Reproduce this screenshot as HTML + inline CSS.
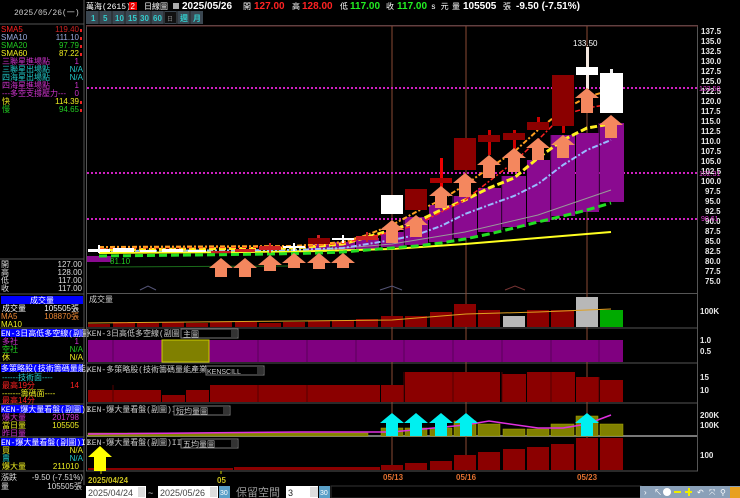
<!DOCTYPE html>
<html><head><meta charset="utf-8"><style>
html,body{margin:0;padding:0;background:#000;width:740px;height:498px;overflow:hidden}
svg{display:block}
text{font-family:"Liberation Sans","Noto Sans CJK TC",sans-serif}
.s{font-family:"Liberation Mono","Noto Sans CJK TC",monospace;font-size:8px}
.ax{font-size:8px;font-weight:bold;fill:#e8e8e8}
</style></head><body>
<svg width="740" height="498" viewBox="0 0 740 498" xmlns="http://www.w3.org/2000/svg">
<rect width="740" height="498" fill="#000"/>
<!-- top bar -->
<text x="86" y="9" class="s" fill="#fff">萬海(2615)</text>
<rect x="129" y="2" width="8" height="8" fill="#e00"/><text x="130.5" y="9" font-size="8" fill="#fff">2</text>
<text x="144" y="9" class="s" fill="#fff">日線圖</text>
<rect x="173" y="3" width="6" height="6" fill="#aaa"/>
<text x="182" y="9" font-size="10" font-weight="bold" fill="#fff">2025/05/26</text>
<text x="243" y="9" class="s" fill="#fff">開</text><text x="254" y="9" font-size="10" font-weight="bold" fill="#f22">127.00</text>
<text x="292" y="9" class="s" fill="#fff">高</text><text x="302" y="9" font-size="10" font-weight="bold" fill="#f22">128.00</text>
<text x="340" y="9" class="s" fill="#fff">低</text><text x="350" y="9" font-size="10" font-weight="bold" fill="#2e2">117.00</text>
<text x="386" y="9" class="s" fill="#fff">收</text><text x="397" y="9" font-size="10" font-weight="bold" fill="#2e2">117.00</text>
<text x="431" y="9" class="s" fill="#fff">s 元</text>
<text x="452" y="9" class="s" fill="#fff">量</text><text x="463" y="9" font-size="10" font-weight="bold" fill="#fff">105505</text>
<text x="503" y="9" class="s" fill="#fff">張</text><text x="516" y="9" font-size="10" font-weight="bold" fill="#fff">-9.50 (-7.51%)</text>
<!-- buttons -->
<rect x="86" y="11" width="117" height="13" fill="#3a4650"/>
<g font-size="8" font-weight="bold" fill="#3cc">
<text x="91" y="21">1</text><text x="103" y="21">5</text><text x="115" y="21">10</text><text x="128" y="21">15</text><text x="140" y="21">30</text><text x="153" y="21">60</text>
<text x="180" y="21">週</text><text x="193" y="21">月</text></g>
<rect x="165" y="12" width="11" height="11" fill="#111"/><text x="167" y="21" font-size="6" fill="#888">日</text>
<g stroke="#222" stroke-width="1"><line x1="99" y1="11" x2="99" y2="24"/><line x1="112" y1="11" x2="112" y2="24"/><line x1="125" y1="11" x2="125" y2="24"/><line x1="138" y1="11" x2="138" y2="24"/><line x1="151" y1="11" x2="151" y2="24"/><line x1="164" y1="11" x2="164" y2="24"/><line x1="177" y1="11" x2="177" y2="24"/><line x1="190" y1="11" x2="190" y2="24"/></g>

<!-- left panel -->
<line x1="84" y1="0" x2="84" y2="485" stroke="#555"/>
<text x="14" y="15" class="s" fill="#ccc">2025/05/26(一)</text>
<line x1="0" y1="24" x2="84" y2="24" stroke="#555"/>
<g class="s">
<text x="1" y="32" fill="#f22">SMA5</text><text x="79" y="32" text-anchor="end" fill="#c22">119.40</text>
<text x="1" y="40" fill="#9ad">SMA10</text><text x="79" y="40" text-anchor="end" fill="#9ad">111.10</text>
<text x="1" y="48" fill="#2c2">SMA20</text><text x="79" y="48" text-anchor="end" fill="#2c2">97.79</text>
<text x="1" y="56" fill="#ee2">SMA60</text><text x="79" y="56" text-anchor="end" fill="#ee2">87.22</text>
<text x="2" y="64" fill="#c3c">三聯星進場點</text><text x="79" y="64" text-anchor="end" fill="#c3c">1</text>
<text x="2" y="72" fill="#2cc">三聯星出場點</text><text x="83" y="72" text-anchor="end" fill="#2cc">N/A</text>
<text x="2" y="80" fill="#2cc">四海星出場點</text><text x="83" y="80" text-anchor="end" fill="#2cc">N/A</text>
<text x="2" y="88" fill="#c3c">四海星進場點</text><text x="79" y="88" text-anchor="end" fill="#c3c">1</text>
<text x="2" y="96" fill="#c3c">---多空支撐壓力---</text><text x="79" y="96" text-anchor="end" fill="#c3c">0</text>
<text x="2" y="104" fill="#ee2">快</text><text x="79" y="104" text-anchor="end" fill="#ee2">114.39</text>
<text x="2" y="112" fill="#2c2">慢</text><text x="79" y="112" text-anchor="end" fill="#2c2">94.65</text>
</g>
<g fill="#e22"><rect x="80" y="29" width="2" height="3"/><rect x="80" y="37" width="2" height="3"/><rect x="80" y="45" width="2" height="3"/><rect x="80" y="53" width="2" height="3"/><rect x="80" y="101" width="2" height="3"/><rect x="80" y="109" width="2" height="3"/></g>
<line x1="0" y1="259" x2="84" y2="259" stroke="#555"/>
<g class="s" fill="#ddd">
<text x="1" y="267">開</text><text x="82" y="267" text-anchor="end">127.00</text>
<text x="1" y="275">高</text><text x="82" y="275" text-anchor="end">128.00</text>
<text x="1" y="283">低</text><text x="82" y="283" text-anchor="end">117.00</text>
<text x="1" y="291">收</text><text x="82" y="291" text-anchor="end">117.00</text></g>
<line x1="0" y1="294" x2="84" y2="294" stroke="#555"/>
<rect x="1" y="296" width="82" height="8" fill="#00f"/><text x="30" y="303" class="s" fill="#fff">成交量</text>
<g class="s"><text x="2" y="311" fill="#fff">成交量</text><text x="79" y="311" text-anchor="end" fill="#fff">105505張</text>
<text x="1" y="319" fill="#e83">MA5</text><text x="79" y="319" text-anchor="end" fill="#e83">108870張</text>
<text x="1" y="327" fill="#ee2">MA10</text></g>
<line x1="0" y1="328" x2="84" y2="328" stroke="#555"/>
<rect x="1" y="329" width="82" height="8" fill="#00f"/><text x="1" y="336" class="s" fill="#fff">EN-3日高低多空線(副圖</text>
<g class="s"><text x="2" y="344" fill="#c3c">多社</text><text x="79" y="344" text-anchor="end" fill="#c3c">1</text>
<text x="2" y="352" fill="#2c2">空社</text><text x="83" y="352" text-anchor="end" fill="#2c2">N/A</text>
<text x="2" y="360" fill="#ee2">休</text><text x="83" y="360" text-anchor="end" fill="#ee2">N/A</text></g>
<line x1="0" y1="363" x2="84" y2="363" stroke="#555"/>
<rect x="1" y="364" width="82" height="8" fill="#00f"/><text x="1" y="371" class="s" fill="#fff">多策略股(技術籌碼量能,</text>
<g class="s"><text x="2" y="380" fill="#2cc">------技術面----</text>
<text x="2" y="388" fill="#f22">最高19分</text><text x="79" y="388" text-anchor="end" fill="#f22">14</text>
<text x="2" y="396" fill="#ee2">-------籌碼面----</text>
<text x="2" y="403" fill="#f22">最高14分</text></g>
<line x1="0" y1="404" x2="84" y2="404" stroke="#555"/>
<rect x="1" y="405" width="82" height="8" fill="#00f"/><text x="1" y="412" class="s" fill="#fff">KEN-爆大量看盤(副圖)I</text>
<g class="s"><text x="2" y="420" fill="#c3c">爆大量</text><text x="79" y="420" text-anchor="end" fill="#c3c">201798</text>
<text x="2" y="428" fill="#ee2">當日量</text><text x="79" y="428" text-anchor="end" fill="#ee2">105505</text>
<text x="2" y="436" fill="#c3c">昨日量</text></g>
<line x1="0" y1="437" x2="84" y2="437" stroke="#555"/>
<rect x="1" y="438" width="82" height="8" fill="#00f"/><text x="1" y="445" class="s" fill="#fff">EN-爆大量看盤(副圖)II</text>
<g class="s"><text x="2" y="453" fill="#ee2">買</text><text x="83" y="453" text-anchor="end" fill="#ee2">N/A</text>
<text x="2" y="461" fill="#2cc">賣</text><text x="83" y="461" text-anchor="end" fill="#2cc">N/A</text>
<text x="2" y="469" fill="#ee2">爆大量</text><text x="79" y="469" text-anchor="end" fill="#ee2">211010</text></g>
<line x1="0" y1="471" x2="84" y2="471" stroke="#555"/>
<g class="s" fill="#ddd"><text x="1" y="480">漲跌</text><text x="83" y="480" text-anchor="end">-9.50 (-7.51%)</text>
<text x="1" y="489">量</text><text x="82" y="489" text-anchor="end">105505張</text></g>

<!-- chart frames -->
<g stroke="#555" fill="none">
<rect x="86.5" y="25.5" width="611" height="268"/>
<line x1="86" y1="328" x2="698" y2="328"/>
<line x1="86" y1="363" x2="698" y2="363"/>
<line x1="86" y1="403" x2="698" y2="403"/>
<line x1="86" y1="436" x2="698" y2="436" stroke="#777" stroke-width="2"/>
<line x1="86" y1="471" x2="698" y2="471"/>
<line x1="697.5" y1="294" x2="697.5" y2="471"/>
<line x1="86.5" y1="294" x2="86.5" y2="471"/>
</g>
<line x1="86" y1="26" x2="698" y2="26" stroke="#6a3030"/>
<g stroke="#8a4a35" stroke-width="1"><line x1="392" y1="26" x2="392" y2="471"/><line x1="466" y1="26" x2="466" y2="471"/><line x1="587" y1="26" x2="587" y2="471"/></g>
<g stroke="#d020c0" stroke-width="2" stroke-dasharray="2,2"><line x1="87" y1="88" x2="697" y2="88"/><line x1="87" y1="173" x2="697" y2="173"/><line x1="87" y1="219" x2="697" y2="219"/></g>

<!-- purple area -->
<g fill="#8a0a90">
<rect x="87" y="256" width="24" height="6"/>
<rect x="308" y="243" width="22" height="8"/><rect x="332" y="242" width="23" height="9"/><rect x="356" y="238" width="23" height="11"/>
<rect x="381" y="232" width="23" height="15"/><rect x="405" y="217" width="23" height="28"/><rect x="429" y="205" width="23" height="37"/><rect x="454" y="196" width="23" height="42"/><rect x="478" y="188" width="23" height="44"/><rect x="502" y="176" width="24" height="51"/><rect x="527" y="160" width="23" height="62"/><rect x="551" y="135" width="24" height="81"/><rect x="576" y="133" width="23" height="79"/><rect x="600" y="123" width="24" height="79"/>
</g>
<g stroke="#6a0870" stroke-width="1"><line x1="404" y1="217" x2="404" y2="247"/><line x1="453" y1="196" x2="453" y2="240"/><line x1="502" y1="176" x2="502" y2="230"/><line x1="551" y1="135" x2="551" y2="220"/><line x1="599" y1="123" x2="599" y2="210"/></g>
<polyline fill="none" stroke="#1a6a1a" stroke-width="1" points="99,267 290,266"/>
<polyline fill="none" stroke="#999" stroke-width="1" points="319,250 392,244 465,232 538,215 611,190"/>
<polyline fill="none" stroke="#ffff20" stroke-width="2" points="99,253 245,252 319,251 392,249 465,244 538,238 611,232"/>
<polyline fill="none" stroke="#22dd22" stroke-width="3" stroke-dasharray="8,4" points="99,256 197,255 270,254 319,253 343,252 367,250 392,248 416,246 441,243 465,239 489,234 514,228 538,222 563,216 587,210 611,203"/>
<polyline fill="none" stroke="#99bbff" stroke-width="2" stroke-dasharray="6,2,2,2" points="99,251 294,250 343,248 392,240 416,235 441,226 465,214 489,205 514,196 538,184 563,165 587,150 611,140"/>
<polyline fill="none" stroke="#ffee22" stroke-width="3" stroke-dasharray="7,3" points="99,250 294,248 343,244 392,230 416,222 441,210 465,200 489,188 514,178 538,158 563,140 587,128 611,124"/>
<polyline fill="none" stroke="#ff2020" stroke-width="1.5" stroke-dasharray="5,2,2,2" points="99,248 294,247 343,243 392,232 416,225 465,200 514,162 538,140 563,115 587,108 611,104"/>
<polyline fill="none" stroke="#ffa020" stroke-width="2" stroke-dasharray="5,2,2,2" points="99,247 294,246 343,242 367,235 392,225 416,212 441,200 465,185 489,168 514,152 538,130 563,110 587,97 611,90"/>
<g fill="#fff"><rect x="88" y="249" width="22" height="3"/><rect x="98" y="245" width="2" height="8"/><rect x="113" y="248" width="21" height="4"/><rect x="140" y="250" width="16" height="2"/><rect x="162" y="249" width="21" height="3"/><rect x="188" y="250" width="18" height="2"/><rect x="283" y="246" width="22" height="2"/><rect x="293" y="243" width="2" height="8"/><rect x="332" y="238" width="22" height="2"/><rect x="342" y="235" width="2" height="8"/></g>
<g fill="#c22"><rect x="211" y="251" width="20" height="2"/><rect x="235" y="249" width="20" height="3"/><rect x="259" y="246" width="22" height="4"/><rect x="269" y="243" width="2" height="10"/><rect x="356" y="236" width="22" height="4"/><rect x="366" y="232" width="2" height="10"/></g>
<rect x="308" y="238" width="22" height="6" fill="#8b0000"/><rect x="317" y="235" width="3" height="3" fill="#c22"/>
<rect x="381" y="195" width="22" height="19" fill="#fff"/>
<rect x="405" y="189" width="22" height="21" fill="#8b0000"/>
<rect x="440" y="158" width="3" height="32" fill="#e00"/><rect x="430" y="178" width="22" height="5" fill="#a00"/>
<rect x="454" y="138" width="22" height="32" fill="#8b0000"/>
<rect x="488" y="130" width="3" height="25" fill="#c00"/><rect x="478" y="135" width="22" height="7" fill="#8b0000"/>
<rect x="513" y="130" width="3" height="22" fill="#c00"/><rect x="503" y="133" width="22" height="7" fill="#8b0000"/>
<rect x="537" y="117" width="3" height="13" fill="#c00"/><rect x="527" y="122" width="22" height="8" fill="#8b0000"/>
<rect x="562" y="75" width="3" height="58" fill="#c00"/><rect x="552" y="75" width="22" height="51" fill="#8b0000"/>
<rect x="586" y="47" width="3" height="42" fill="#f4e8e0"/><rect x="576" y="67" width="22" height="8" fill="#fff"/>
<text x="573" y="46" font-size="8" fill="#fff">133.50</text>
<rect x="610" y="69" width="3" height="6" fill="#eee"/><rect x="600" y="73" width="23" height="40" fill="#fff"/>
<g fill="#f4875e">
<path d="M221,258 L233,268 L227,268 L227,277 L215,277 L215,268 L209,268Z"/>
<path d="M245,258 L257,268 L251,268 L251,277 L239,277 L239,268 L233,268Z"/>
<path d="M270,255 L282,265 L276,265 L276,271 L264,271 L264,265 L258,265Z"/>
<path d="M294,253 L306,263 L300,263 L300,268 L288,268 L288,263 L282,263Z"/>
<path d="M319,253 L331,263 L325,263 L325,269 L313,269 L313,263 L307,263Z"/>
<path d="M343,253 L355,263 L349,263 L349,268 L337,268 L337,263 L331,263Z"/>
<path d="M392,220 L404,230 L398,230 L398,243 L386,243 L386,230 L380,230Z"/>
<path d="M416,215 L428,225 L422,225 L422,237 L410,237 L410,225 L404,225Z"/>
<path d="M441,186 L453,196 L447,196 L447,208 L435,208 L435,196 L429,196Z"/>
<path d="M465,173 L477,183 L471,183 L471,197 L459,197 L459,183 L453,183Z"/>
<path d="M489,155 L501,165 L495,165 L495,178 L483,178 L483,165 L477,165Z"/>
<path d="M514,148 L526,158 L520,158 L520,172 L508,172 L508,158 L502,158Z"/>
<path d="M538,138 L550,148 L544,148 L544,160 L532,160 L532,148 L526,148Z"/>
<path d="M563,135 L575,145 L569,145 L569,158 L557,158 L557,145 L551,145Z"/>
<path d="M587,88 L599,98 L593,98 L593,113 L581,113 L581,98 L575,98Z"/>
<path d="M611,115 L623,125 L617,125 L617,138 L605,138 L605,125 L599,125Z"/>
</g>
<text x="110" y="264" font-size="8" fill="#2c2">81.10</text>
<path d="M140,290 L148,286 L156,290" stroke="#557" fill="none"/><path d="M380,290 L392,286 L402,290" stroke="#557" fill="none"/><path d="M505,290 L515,286 L525,290" stroke="#733" fill="none"/>
<g class="ax">
<text x="701" y="34">137.5</text><text x="701" y="44">135.0</text><text x="701" y="54">132.5</text><text x="701" y="64">130.0</text><text x="701" y="74">127.5</text><text x="701" y="84">125.0</text><text x="701" y="94">122.5</text><text x="701" y="104">120.0</text><text x="701" y="114">117.5</text><text x="701" y="124">115.0</text><text x="701" y="134">112.5</text><text x="701" y="144">110.0</text><text x="701" y="154">107.5</text><text x="701" y="164">105.0</text><text x="701" y="174">102.5</text><text x="701" y="184">100.0</text><text x="705" y="194">97.5</text><text x="705" y="204">95.0</text><text x="705" y="214">92.5</text><text x="705" y="224">90.0</text><text x="705" y="234">87.5</text><text x="705" y="244">85.0</text><text x="705" y="254">82.5</text><text x="705" y="264">80.0</text><text x="705" y="274">77.5</text><text x="705" y="284">75.0</text>
</g>
<g font-size="7" fill="#e040d0"><text x="699" y="91">123.50</text><text x="699" y="176">102.31</text><text x="701" y="221">90.61</text></g>

<!-- volume panel -->
<text x="89" y="302" class="s" fill="#ccc">成交量</text>
<g fill="#8b0000">
<rect x="88" y="324" width="22" height="3"/><rect x="113" y="322" width="22" height="5"/><rect x="137" y="323" width="22" height="4"/><rect x="162" y="322" width="22" height="5"/><rect x="186" y="323" width="22" height="4"/><rect x="210" y="322" width="22" height="5"/><rect x="235" y="322" width="22" height="5"/><rect x="259" y="323" width="22" height="4"/><rect x="283" y="322" width="22" height="5"/><rect x="308" y="321" width="22" height="6"/><rect x="332" y="320" width="22" height="7"/><rect x="356" y="319" width="22" height="8"/>
<rect x="381" y="316" width="22" height="11"/><rect x="405" y="316" width="22" height="11"/><rect x="430" y="312" width="22" height="15"/><rect x="454" y="304" width="22" height="23"/><rect x="478" y="310" width="22" height="17"/><rect x="527" y="310" width="22" height="17"/><rect x="551" y="310" width="23" height="17"/></g>
<rect x="503" y="316" width="22" height="11" fill="#b8b8b8"/><rect x="576" y="297" width="22" height="30" fill="#b8b8b8"/><rect x="600" y="310" width="23" height="17" fill="#0a0"/>
<polyline fill="none" stroke="#e0a020" points="88,323 300,321 392,320 466,314 538,312 587,310 611,309"/>
<text x="700" y="314" class="ax">100K</text>
<!-- panel 2 -->
<text x="87" y="336" class="s" fill="#ccc">KEN-3日高低多空線(副圖)</text>
<rect x="181" y="329" width="57" height="9" fill="#000" stroke="#777"/><text x="183" y="337" class="s" fill="#ccc">主圖</text><rect x="231" y="330" width="6" height="7" fill="#333"/>
<rect x="88" y="340" width="535" height="22" fill="#800080"/>
<rect x="162" y="340" width="47" height="22" fill="#808000" stroke="#cc0"/>
<g stroke="#5a005a"><line x1="113" y1="340" x2="113" y2="362"/><line x1="258" y1="340" x2="258" y2="362"/><line x1="307" y1="340" x2="307" y2="362"/><line x1="356" y1="340" x2="356" y2="362"/><line x1="404" y1="340" x2="404" y2="362"/><line x1="453" y1="340" x2="453" y2="362"/><line x1="502" y1="340" x2="502" y2="362"/><line x1="551" y1="340" x2="551" y2="362"/><line x1="599" y1="340" x2="599" y2="362"/></g>
<text x="700" y="343" class="ax">1.0</text><text x="700" y="354" class="ax">0.5</text>
<!-- panel 3 -->
<text x="87" y="372" class="s" fill="#ccc">KEN-多策略股(技術籌碼量能產業)</text>
<rect x="206" y="366" width="58" height="9" fill="#000" stroke="#777"/><text x="207" y="374" font-size="7" fill="#ccc">KENSCILL</text><rect x="257" y="367" width="6" height="7" fill="#333"/>
<g fill="#8b0000"><rect x="88" y="390" width="73" height="12"/><rect x="162" y="395" width="23" height="7"/><rect x="186" y="390" width="23" height="12"/><rect x="210" y="385" width="170" height="17"/><rect x="381" y="385" width="23" height="17"/><rect x="405" y="372" width="95" height="30"/><rect x="502" y="374" width="24" height="28"/><rect x="527" y="372" width="48" height="30"/><rect x="576" y="377" width="23" height="25"/><rect x="600" y="380" width="23" height="22"/></g>
<g stroke="#500"><line x1="113" y1="385" x2="113" y2="402"/><line x1="258" y1="385" x2="258" y2="402"/><line x1="307" y1="385" x2="307" y2="402"/><line x1="404" y1="372" x2="404" y2="402"/><line x1="453" y1="372" x2="453" y2="402"/><line x1="502" y1="372" x2="502" y2="402"/><line x1="551" y1="372" x2="551" y2="402"/><line x1="599" y1="377" x2="599" y2="402"/></g>
<text x="700" y="380" class="ax">15</text><text x="700" y="393" class="ax">10</text>
<!-- panel 4 -->
<text x="87" y="412" class="s" fill="#ccc">KEN-爆大量看盤(副圖)I</text>
<rect x="174" y="406" width="56" height="9" fill="#000" stroke="#777"/><text x="176" y="414" class="s" fill="#ccc">短均量圖</text><rect x="223" y="407" width="6" height="7" fill="#333"/>
<g fill="#808000" stroke="#aa0" stroke-width="0.5"><rect x="88" y="433" width="280" height="3"/><rect x="381" y="428" width="22" height="8"/><rect x="405" y="428" width="22" height="8"/><rect x="430" y="428" width="22" height="8"/><rect x="454" y="421" width="22" height="15"/><rect x="478" y="424" width="22" height="12"/><rect x="503" y="429" width="22" height="7"/><rect x="527" y="429" width="22" height="7"/><rect x="551" y="424" width="23" height="12"/><rect x="576" y="416" width="22" height="20"/><rect x="600" y="424" width="23" height="12"/></g>
<polyline fill="none" stroke="#e030e0" stroke-width="1.5" points="88,434 300,432 392,432 465,425 489,421 538,428 563,428 587,424 611,415"/>
<g fill="#00f0f0">
<path d="M392,413 L404,423 L398,423 L398,436 L386,436 L386,423 L380,423Z"/>
<path d="M416,413 L428,423 L422,423 L422,436 L410,436 L410,423 L404,423Z"/>
<path d="M441,413 L453,423 L447,423 L447,436 L435,436 L435,423 L429,423Z"/>
<path d="M466,413 L478,423 L472,423 L472,436 L460,436 L460,423 L454,423Z"/>
<path d="M587,413 L599,423 L593,423 L593,436 L581,436 L581,423 L575,423Z"/></g>
<text x="700" y="418" class="ax">200K</text><text x="700" y="428" class="ax">100K</text>
<!-- panel 5 -->
<text x="87" y="445" class="s" fill="#ccc">KEN-爆大量看盤(副圖)III</text>
<rect x="181" y="439" width="57" height="9" fill="#000" stroke="#777"/><text x="183" y="447" class="s" fill="#ccc">五均量圖</text><rect x="231" y="440" width="6" height="7" fill="#333"/>
<g fill="#8b0000"><rect x="88" y="468" width="145" height="2"/><rect x="234" y="467" width="146" height="3"/><rect x="381" y="465" width="22" height="5"/><rect x="405" y="463" width="22" height="7"/><rect x="430" y="461" width="22" height="9"/><rect x="454" y="455" width="22" height="15"/><rect x="478" y="452" width="22" height="18"/><rect x="503" y="449" width="22" height="21"/><rect x="527" y="447" width="22" height="23"/><rect x="551" y="444" width="23" height="26"/><rect x="576" y="438" width="22" height="32"/><rect x="600" y="438" width="23" height="32"/></g>
<path d="M100,446 L112,457 L106,457 L106,471 L94,471 L94,457 L88,457Z" fill="#ffff00"/>
<text x="700" y="458" class="ax">100</text>
<!-- dates -->
<g font-size="8" font-weight="bold"><text x="88" y="483" fill="#c8c020">2025/04/24</text><text x="217" y="483" fill="#c8c020">05</text>
<text x="383" y="480" fill="#e07030">05/13</text><text x="456" y="480" fill="#e07030">05/16</text><text x="577" y="480" fill="#e07030">05/23</text></g>
<line x1="101" y1="471" x2="101" y2="474" stroke="#cc0"/><line x1="221" y1="471" x2="221" y2="474" stroke="#cc0"/>
<!-- bottom bar -->
<rect x="86" y="486" width="60" height="12" fill="#fff"/><text x="88" y="496" font-size="9" fill="#444">2025/04/24</text><rect x="138" y="487" width="7" height="10" fill="#ddd"/>
<text x="148" y="496" font-size="9" fill="#ccc">~</text>
<rect x="158" y="486" width="60" height="12" fill="#fff"/><text x="160" y="496" font-size="9" fill="#444">2025/05/26</text><rect x="210" y="487" width="7" height="10" fill="#ddd"/>
<rect x="219" y="486" width="11" height="12" fill="#5aa0c8"/><text x="220" y="495" font-size="7" fill="#fff">30</text>
<text x="236" y="496" font-size="11" fill="#999">保留空間</text>
<rect x="286" y="486" width="32" height="12" fill="#fff"/><text x="288" y="496" font-size="9" fill="#222">3</text><rect x="310" y="487" width="8" height="10" fill="#ddd"/>
<rect x="319" y="486" width="11" height="12" fill="#5aa0c8"/><text x="320" y="495" font-size="7" fill="#fff">30</text>
<rect x="331" y="486" width="310" height="12" fill="#000" stroke="#333"/>
<rect x="640" y="486" width="100" height="12" fill="#8aa0b8"/>
<g fill="#fff" font-size="8"><text x="644" y="495">›</text><text x="654" y="495">↖</text><circle cx="667" cy="492" r="4" fill="#fff"/><rect x="674" y="491" width="7" height="2" fill="#ee0"/><rect x="685" y="491" width="7" height="2" fill="#ee0"/><rect x="688" y="488" width="2" height="8" fill="#ee0"/><text x="697" y="495">↶</text><text x="709" y="495">⤧</text><text x="720" y="495">⚲</text></g>
<rect x="730" y="487" width="10" height="11" fill="#e8a020"/>
</svg>
</body></html>
